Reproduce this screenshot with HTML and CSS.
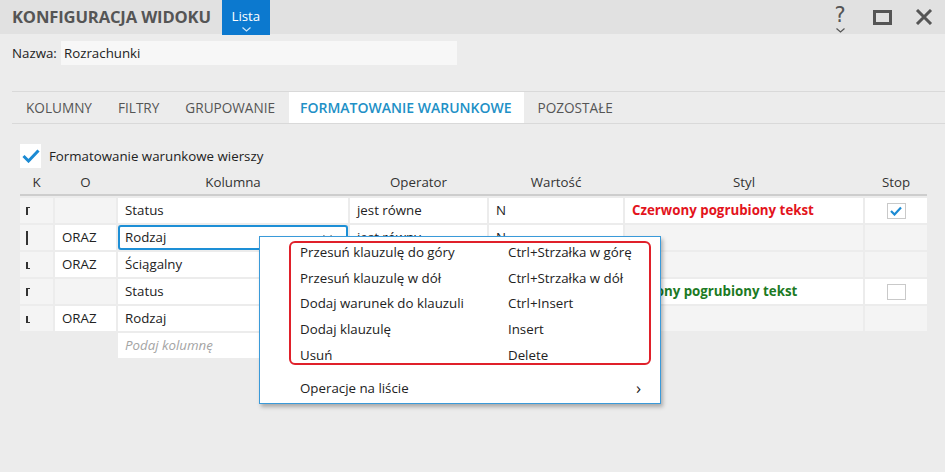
FILE: index.html
```html
<!DOCTYPE html>
<html lang="pl">
<head>
<meta charset="utf-8">
<link rel="stylesheet" href="styles.css">
</head>
<body>
<div class="window">
  <header class="titlebar">
    <div class="title">KONFIGURACJA WIDOKU</div>
    <div class="lista">Lista
      <svg class="lista-chev" width="9" height="5" viewBox="0 0 9 5"><path d="M0.5 0.5 L4.5 4 L8.5 0.5" fill="none" stroke="#cfe6f8" stroke-width="1.2"/></svg>
    </div>
    <div class="spacer"></div>
    <div class="winbtns">
      <div class="wb help">?
        <svg class="help-chev" width="9" height="5" viewBox="0 0 9 5"><path d="M0.5 0.5 L4.5 4 L8.5 0.5" fill="none" stroke="#555" stroke-width="1.2"/></svg>
      </div>
      <div class="wb"><span class="maxbox"></span></div>
      <div class="wb">
        <svg width="18" height="16" viewBox="0 0 18 16"><path d="M2 1 L16 15 M16 1 L2 15" stroke="#555" stroke-width="3"/></svg>
      </div>
    </div>
  </header>

  <div class="content">
    <div class="name-row">
      <span class="name-label">Nazwa:</span>
      <div class="name-input">Rozrachunki</div>
    </div>

    <nav class="tabs">
      <div class="tab">KOLUMNY</div>
      <div class="tab">FILTRY</div>
      <div class="tab">GRUPOWANIE</div>
      <div class="tab active">FORMATOWANIE WARUNKOWE</div>
      <div class="tab">POZOSTAŁE</div>
    </nav>

    <div class="check-row">
      <span class="big-check">
        <svg width="18" height="14" viewBox="0 0 18 14"><path d="M1.5 7 L6.5 12 L16.5 1.5" fill="none" stroke="#1b8ad3" stroke-width="3"/></svg>
      </span>
      <span>Formatowanie warunkowe wierszy</span>
    </div>

    <div class="grid head">
      <div>K</div><div>O</div><div>Kolumna</div><div>Operator</div><div>Wartość</div><div>Styl</div><div>Stop</div>
    </div>

    <div class="grid body">
      <div class="c g"><span class="br br-top"></span></div>
      <div class="c g"></div>
      <div class="c">Status</div>
      <div class="c">jest równe</div>
      <div class="c">N</div>
      <div class="c red">Czerwony pogrubiony tekst</div>
      <div class="c center"><span class="cb on"><svg width="12" height="10" viewBox="0 0 12 10"><path d="M1 5 L4.5 8.5 L11 1.5" fill="none" stroke="#1b8ad3" stroke-width="2.2"/></svg></span></div>

      <div class="c g"><span class="br br-mid"></span></div>
      <div class="c">ORAZ</div>
      <div class="c edit">Rodzaj
        <svg class="dd" width="9" height="6" viewBox="0 0 9 6"><path d="M0.5 0.5 L4.5 5 L8.5 0.5" fill="none" stroke="#444" stroke-width="1.2"/></svg>
      </div>
      <div class="c">jest równy</div>
      <div class="c">N</div>
      <div class="c g"></div>
      <div class="c g"></div>

      <div class="c g"><span class="br br-bot"></span></div>
      <div class="c">ORAZ</div>
      <div class="c">Ściągalny</div>
      <div class="c"></div>
      <div class="c"></div>
      <div class="c g"></div>
      <div class="c g"></div>

      <div class="c g"><span class="br br-top"></span></div>
      <div class="c g"></div>
      <div class="c">Status</div>
      <div class="c"></div>
      <div class="c"></div>
      <div class="c green">Zielony pogrubiony tekst</div>
      <div class="c center"><span class="cb"></span></div>

      <div class="c g"><span class="br br-bot"></span></div>
      <div class="c">ORAZ</div>
      <div class="c">Rodzaj</div>
      <div class="c"></div>
      <div class="c"></div>
      <div class="c g"></div>
      <div class="c g"></div>

      <div class="c empty"></div>
      <div class="c empty"></div>
      <div class="c ph">Podaj kolumnę</div>
    </div>
  </div>

  <div class="menu">
    <div class="menu-group">
      <div class="mi"><span class="ml">Przesuń klauzulę do góry</span><span class="ms">Ctrl+Strzałka w górę</span></div>
      <div class="mi"><span class="ml">Przesuń klauzulę w dół</span><span class="ms">Ctrl+Strzałka w dół</span></div>
      <div class="mi"><span class="ml">Dodaj warunek do klauzuli</span><span class="ms">Ctrl+Insert</span></div>
      <div class="mi"><span class="ml">Dodaj klauzulę</span><span class="ms">Insert</span></div>
      <div class="mi"><span class="ml">Usuń</span><span class="ms">Delete</span></div>
    </div>
    <div class="mi sub"><span class="ml">Operacje na liście</span><span class="arrow">›</span></div>
  </div>
</div>
</body>
</html>
```

FILE: styles.css
```css
* { box-sizing: border-box; }
html, body { margin: 0; padding: 0; }
body {
  width: 945px;
  height: 472px;
  overflow: hidden;
  background: #ececec;
  font-family: "Open Sans", "Noto Sans", sans-serif;
  font-size: 13.3px;
  color: #222;
}
.window { position: relative; width: 945px; height: 472px; }

.titlebar {
  display: flex;
  align-items: stretch;
  height: 34px;
  background: #e1e1e1;
  padding-left: 12px;
}
.title {
  font-weight: 700;
  font-size: 16.6px;
  color: #555;
  line-height: 34px;
  letter-spacing: -0.15px;
}
.lista {
  position: relative;
  margin-left: 11px;
  width: 48px;
  height: 35px;
  background: #0c79cf;
  color: #fff;
  font-size: 13.3px;
  text-align: center;
  padding-top: 7px;
}
.lista-chev { position: absolute; left: 20px; top: 27px; }
.spacer { flex: 1; }
.winbtns { display: flex; align-items: center; }
.wb {
  position: relative;
  width: 42px;
  height: 34px;
  display: flex;
  align-items: center;
  justify-content: center;
  color: #555;
}
.help { font-size: 21px; font-family: "DejaVu Sans", sans-serif; padding-bottom: 4px; }
.help-chev { position: absolute; left: 17px; top: 28px; }
.maxbox { width: 19px; height: 15px; border: 3px solid #555; }

.content { padding-left: 12px; }
.name-row { display: flex; align-items: center; height: 24px; margin-top: 7px; }
.name-label { width: 49px; }
.name-input {
  width: 396px;
  height: 24px;
  background: #f7f7f7;
  padding-left: 3px;
  line-height: 24px;
}

.tabs {
  display: flex;
  margin-top: 26px;
  height: 33px;
  border-top: 1px solid #d9d9d9;
  border-bottom: 1px solid #d9d9d9;
}
.tab {
  padding: 0 12px 0 14px;
  line-height: 31px;
  color: #555;
  font-size: 13.6px;
}
.tab.active {
  background: #fff;
  color: #2190c6;
  font-weight: 600;
  font-size: 14px;
  margin-left: 2px;
  padding: 0 12px 0 11px;
}

.check-row {
  display: flex;
  align-items: center;
  gap: 8px;
  margin-top: 20px;
  margin-left: 8px;
  height: 24px;
}
.big-check {
  width: 21px;
  height: 24px;
  background: #fff;
  display: flex;
  align-items: center;
  justify-content: center;
}

.grid {
  display: grid;
  grid-template-columns: 33px 61px 230px 137px 134px 238px 62px;
  column-gap: 2px;
  margin-left: 8px;
  width: 907px;
}
.grid.head {
  margin-top: 2px;
  height: 26px;
  border-bottom: 2px solid #cdcdcd;
  text-align: center;
  line-height: 24px;
  color: #333;
}
.grid.body {
  margin-top: 2px;
  row-gap: 2px;
  grid-auto-rows: 25px;
}
.c {
  position: relative;
  background: #fff;
  padding-left: 7px;
  line-height: 25px;
  white-space: nowrap;
  overflow: hidden;
}
.c.g { background: #f4f4f4; }
.c.empty { background: transparent; }
.c.center { display: flex; align-items: center; justify-content: center; padding-left: 0; }
.c.red { color: #e3141c; font-weight: 700; }
.c.green { color: #1c7a24; font-weight: 700; }
.c.ph { color: #a4a4a4; font-style: italic; }
.c.edit {
  border: 2px solid #1d8fd6;
  border-radius: 3px;
  line-height: 21px;
  padding-left: 5px;
  overflow: visible;
}
.dd { position: absolute; right: 14px; top: 8px; }

.br { position: absolute; left: 6px; border-color: #333; border-style: solid; border-width: 0; }
.br-top { top: 9px; width: 4px; height: 8px; border-left-width: 2px; border-top-width: 1.5px; }
.br-mid { top: 6px; width: 2px; height: 14px; border-left-width: 2px; }
.br-bot { top: 10px; width: 4px; height: 7px; border-left-width: 2px; border-bottom-width: 1.5px; }

.cb {
  width: 19px;
  height: 16px;
  border: 1px solid #c9c9c9;
  background: #fff;
  display: flex;
  align-items: center;
  justify-content: center;
}

.menu {
  position: absolute;
  left: 259px;
  top: 236px;
  width: 402px;
  height: 168px;
  background: #fff;
  border: 1px solid #3a9ad9;
  box-shadow: 2px 3px 4px rgba(0,0,0,0.28);
  padding: 4px 9px 0 29px;
}
.menu-group {
  border: 2px solid #e0202a;
  border-radius: 6px;
  height: 124px;
  padding: 0 0 0 9px;
}
.mi {
  display: flex;
  align-items: center;
  height: 25.75px;
  color: #222;
}
.menu-group .mi:first-child { margin-top: -4px; }
.ml { width: 208px; }
.sub { margin-top: 9px; padding-left: 11px; height: 27px; }
.sub .ml { flex: 1; }
.arrow { font-size: 17px; padding-right: 10px; line-height: 1; }
```
